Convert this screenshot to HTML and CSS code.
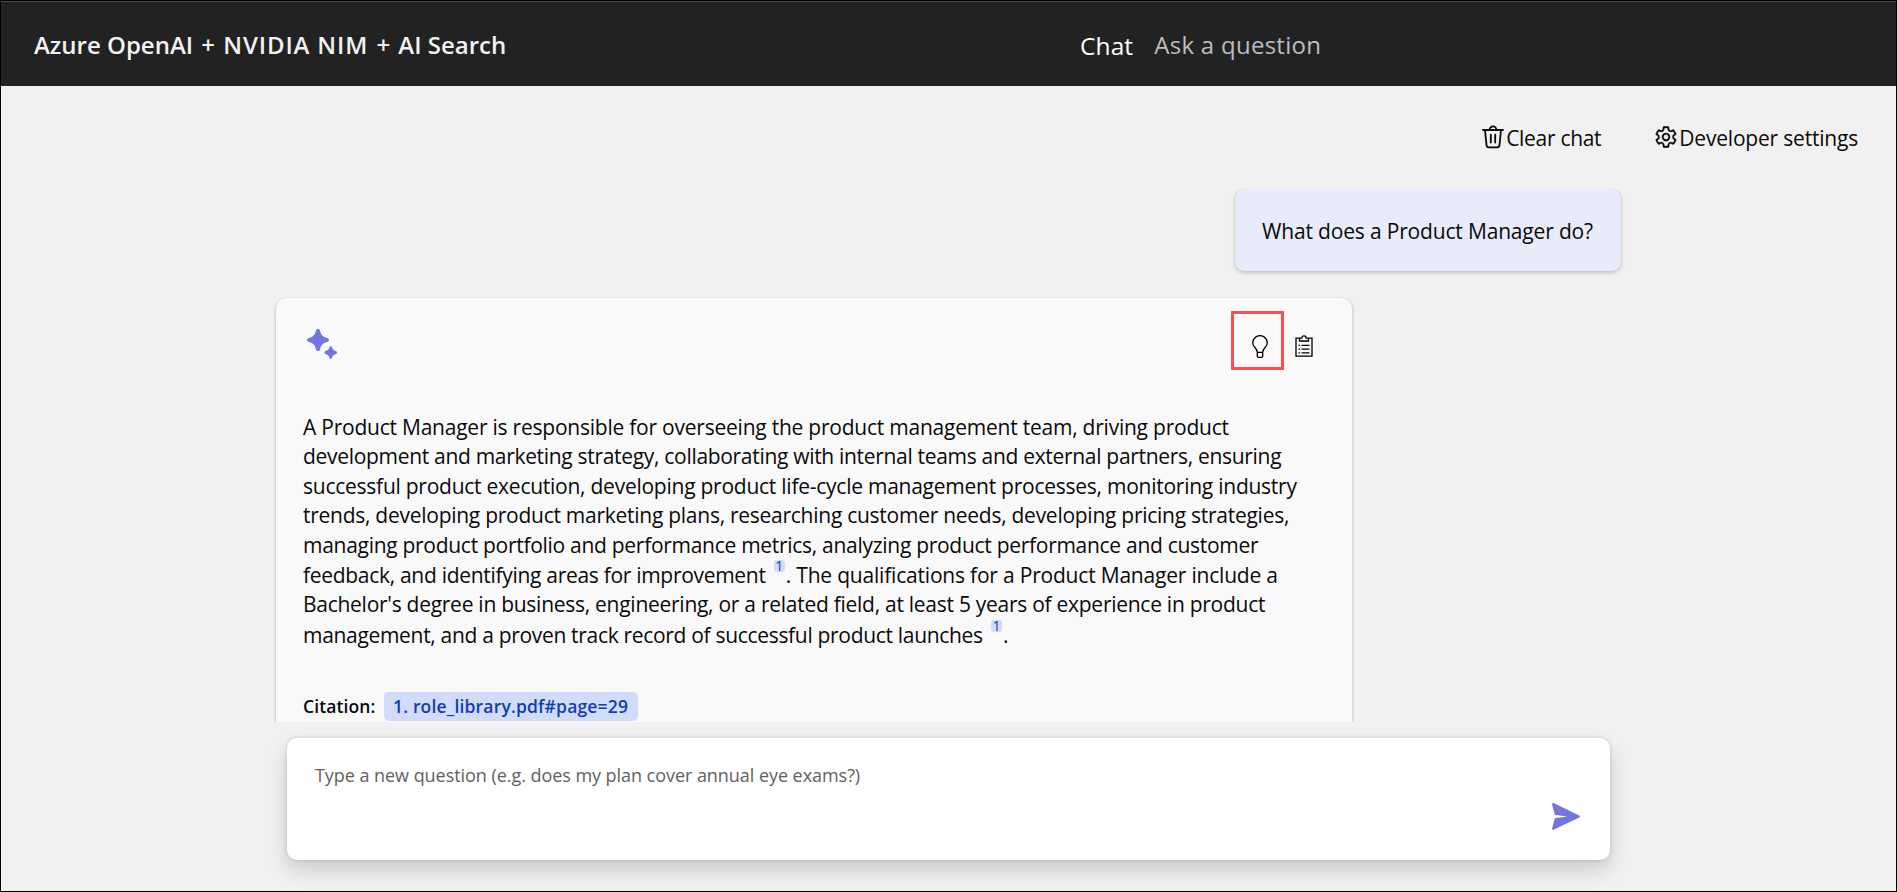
FILE: index.html
```html
<!DOCTYPE html>
<html lang="en">
<head>
<meta charset="utf-8">
<title>Azure OpenAI + NVIDIA NIM + AI Search</title>
<link rel="stylesheet" href="styles.css">
</head>
<body>
<div class="app">
  <header class="header">
    <h1 class="title">Azure OpenAI <span class="plus">+</span> <span class="brand">NVIDIA NIM</span> <span class="plus">+</span> AI Search</h1>
    <nav class="nav">
      <a class="nav-link active">Chat</a>
      <a class="nav-link">Ask a question</a>
    </nav>
  </header>
  <div class="commands">
    <button class="command">
      <svg class="command-icon" viewBox="0 0 22 24" fill="none" stroke="#0a0a0a" stroke-width="1.8" stroke-linecap="round" stroke-linejoin="round"><path d="M1 5h20M7.600 4.800a3.400 3.400 0 0 1 6.800 0M3 5.200l1.500 14.900a2.400 2.400 0 0 0 2.400 2.200h8.200a2.400 2.400 0 0 0 2.400-2.200L19 5.200M8.800 9.600v8M13.200 9.600v8"/></svg>
      <span class="clear-label">Clear chat</span>
    </button>
    <button class="command">
      <svg class="command-icon gear" viewBox="2 2 20 20" fill="#0a0a0a"><path d="M12.01 2.25c.74 0 1.47.1 2.18.25.32.07.55.33.59.65l.17 1.53a1.38 1.38 0 0 0 1.92 1.11l1.4-.61c.3-.13.64-.06.85.17a9.8 9.8 0 0 1 2.2 3.8c.1.3 0 .63-.26.82l-1.25.92a1.38 1.38 0 0 0 0 2.22l1.25.92c.26.19.36.52.27.82a9.8 9.8 0 0 1-2.2 3.8.75.75 0 0 1-.85.17l-1.4-.62a1.38 1.38 0 0 0-1.93 1.12l-.17 1.52a.75.75 0 0 1-.58.65 9.5 9.5 0 0 1-4.4 0 .75.75 0 0 1-.57-.65l-.17-1.52a1.38 1.38 0 0 0-1.93-1.11l-1.4.62a.75.75 0 0 1-.85-.18 9.8 9.8 0 0 1-2.2-3.8c-.1-.3 0-.63.26-.82l1.25-.92a1.38 1.38 0 0 0 0-2.22l-1.24-.92a.75.75 0 0 1-.28-.82 9.8 9.8 0 0 1 2.2-3.8c.23-.23.57-.3.86-.17l1.4.62c.4.17.86.15 1.25-.08.38-.22.63-.6.68-1.04l.17-1.53a.75.75 0 0 1 .58-.65c.72-.16 1.45-.24 2.2-.25zm0 1.5c-.45 0-.9.04-1.35.12l-.11.97a2.89 2.89 0 0 1-4.03 2.33l-.9-.4A8.3 8.3 0 0 0 4.28 9.1l.8.59a2.88 2.88 0 0 1 0 4.64l-.8.58a8.3 8.3 0 0 0 1.35 2.32l.9-.4a2.88 2.88 0 0 1 4.02 2.33l.1.99c.9.15 1.8.15 2.7 0l.1-.99a2.88 2.88 0 0 1 4.02-2.32l.9.4a8.3 8.3 0 0 0 1.36-2.33l-.8-.59a2.88 2.88 0 0 1 0-4.64l.8-.59a8.3 8.3 0 0 0-1.35-2.32l-.9.4a2.88 2.88 0 0 1-4.02-2.32l-.11-.98c-.45-.08-.9-.12-1.34-.12zM12 8.25a3.75 3.75 0 1 1 0 7.5 3.75 3.75 0 0 1 0-7.5zm0 1.5a2.25 2.25 0 1 0 0 4.5 2.25 2.25 0 0 0 0-4.5z" stroke="#0a0a0a" stroke-width=".25"/></svg>
      <span class="settings-label">Developer settings</span>
    </button>
  </div>
  <main class="stream">
    <div class="user-row"><div class="bubble">What does a Product Manager do?</div></div>
    <section class="answer">
      <div class="answer-head">
        <svg class="sparkle" viewBox="0 0 30 30" fill="#7376e1"><path d="M11 0c1 0 1.800.7 2 1.600 1 4.300 2.700 6.300 7 7.500 1 .3 2 .8 2 1.900s-1 1.600-2 1.900c-4.300 1.200-6 3.200-7 7.500-.2.900-1 1.600-2 1.600s-1.800-.7-2-1.600c-1-4.300-2.700-6.300-7-7.500-1-.3-2-.8-2-1.900s1-1.600 2-1.900c4.300-1.200 6-3.200 7-7.500.2-.9 1-1.600 2-1.600z"/><path d="M23.700 17.300c.6 0 1 .4 1.200.9.600 2 1.500 2.900 3.900 3.900.6.200 1.200.7 1.200 1.400s-.6 1.200-1.200 1.400c-2.400 1-3.300 1.900-3.900 4.200-.2.500-.6.900-1.200.9s-1-.4-1.200-.9c-.6-2.300-1.500-3.200-3.900-4.200-.6-.2-1.200-.7-1.200-1.400s.6-1.200 1.200-1.400c2.400-1 3.300-1.900 3.900-3.900.2-.5.600-.9 1.200-.9z"/></svg>
        <div class="tools">
          <button class="tool highlighted"><svg class="bulb" viewBox="0 0 16 23" fill="none" stroke="#000" stroke-width="1.300"><path d="M5.300 17.300C5.300 13 .7 12 .7 7.900a7.300 7.300 0 0 1 14.600 0c0 4.100-4.600 5.100-4.600 9.400M5.300 17.300h5.400M5.300 17v4.200q0 1.100 1.100 1.100h3.200q1.100 0 1.100-1.100V17"/></svg></button>
          <button class="tool"><svg class="clip" viewBox="0 0 18 22" fill="none" stroke="#000" stroke-width="1.300"><path d="M4.500 3.200H1v18h16v-18h-3.500M4.500 6V3.200h2.300c0-3.200 4.400-3.200 4.400 0h2.300V6zM6.500 10.300h8M6.500 14.100h8M6.500 17.900h8M3.500 10.300H5M3.500 14.100H5M3.500 17.900H5"/></svg></button>
        </div>
      </div>
      <p class="answer-text">
        <span class="line l1">A Product Manager is responsible for overseeing the product management team, driving product</span>
        <span class="line l2">development and marketing strategy, collaborating with internal teams and external partners, ensuring</span>
        <span class="line l3">successful product execution, developing product life-cycle management processes, monitoring industry</span>
        <span class="line l4">trends, developing product marketing plans, researching customer needs, developing pricing strategies,</span>
        <span class="line l5">managing product portfolio and performance metrics, analyzing product performance and customer</span>
        <span class="line l6">feedback, and identifying areas for improvement <sup class="ref">1</sup><span class="l6-end">. The qualifications for a Product Manager include a</span></span>
        <span class="line l7">Bachelor's degree in business, engineering, or a related field, at least 5 years of experience in product</span>
        <span class="line l8">management, and a proven track record of successful product launches <sup class="ref">1</sup>.</span>
      </p>
      <div class="citations"><span class="citation-label">Citation:</span><a class="citation">1. role_library.pdf#page=29</a></div>
    </section>
  </main>
  <div class="composer">
    <div class="placeholder">Type a new question (e.g. does my plan cover annual eye exams?)</div>
    <button class="send"><svg class="send-icon" viewBox="0 0 28 27" fill="#7376e1"><path d="M1.500.1 27.300 12.500q1.400.9 0 1.900L1.500 26.800Q-.2 27.100.1 25.500L2.600 16q.2-.9 1.100-1l11.800-1.500L3.700 12q-.9-.1-1.100-1L.1 1.500Q-.2-.2 1.500.1z"/></svg></button>
  </div>
</div>
</body>
</html>
```
FILE: styles.css
```css
* { box-sizing: border-box; }
body { margin: 0; font-family: "Open Sans", "Noto Sans", sans-serif; color: #0a0a0a; }
button { border: 0; background: none; padding: 0; margin: 0; font: inherit; color: inherit; }
svg { display: block; flex: none; }
.app { width: 1897px; height: 892px; border: 1px solid #000; background: #f1f1f1; display: flex; flex-direction: column; overflow: hidden; }

.header { height: 85px; flex: none; background: #222; border-top: 1px solid #4a4a4a; display: grid; grid-template-columns: 1079px 1fr; align-items: center; color: #f2f2f2; white-space: nowrap; }
.title { margin: 0; padding: 2px 0 0 33px; font-size: 24px; line-height: 34px; font-weight: 600; }
.plus { margin: 0 2px; }
.brand { letter-spacing: .85px; }
.nav { display: flex; gap: 21px; font-size: 24px; line-height: 34px; padding-top: 2px; }
.nav-link { color: #bdbdbd; padding-bottom: 1px; letter-spacing: .28px; }
.nav-link.active { color: #fff; padding: 1px 0 0; font-size: 24.500px; letter-spacing: .1px; }

.commands { height: 103px; flex: none; display: flex; justify-content: flex-end; gap: 54px; padding: 38px 38px 0 0; white-space: nowrap; }
.command { height: 30px; display: flex; align-items: flex-start; gap: 2px; font-size: 21px; line-height: 29px; }
.command-icon { width: 22px; height: 24px; margin-top: 1px; }
.command-icon.gear { width: 22px; height: 22px; margin-top: 2px; }
.clear-label { letter-spacing: -.3px; }
.settings-label { letter-spacing: -.2px; }

.stream { height: 533px; flex: none; overflow: hidden; padding: 0 275px; }
.user-row { display: flex; justify-content: flex-end; margin-bottom: 27px; }
.bubble { width: 386px; height: 82px; border-radius: 9px; background: #e8ebfa; box-shadow: 0 2px 4px rgba(0,0,0,.18), 0 0 2px rgba(0,0,0,.12); padding: 26px 27px; font-size: 21px; line-height: 32px; letter-spacing: -.17px; white-space: nowrap; }
.answer { width: 1076px; height: 480px; border-radius: 10px; background: #f9f9f9; box-shadow: 0 2px 4px rgba(0,0,0,.18), 0 0 2px rgba(0,0,0,.12); padding: 13px 28px 0 27px; }
.answer-head { height: 101.500px; display: flex; justify-content: space-between; }
.sparkle { width: 30px; height: 30px; margin: 18px 0 0 4px; }
.tools { display: flex; }
.tool { display: flex; align-items: flex-start; height: 59px; padding: 24px 11px 0; }
.tool.highlighted { width: 53px; border: 3px solid #fb4e4e; padding: 21px 13px 0 18px; }
.bulb { width: 16px; height: 23px; }
.clip { width: 18px; height: 22px; }

.answer-text { margin: 0; font-size: 21px; line-height: 29.600px; }
.line { display: block; height: 29.600px; white-space: nowrap; }
.l1 { letter-spacing: -.23px; }
.l2 { letter-spacing: -.31px; }
.l3 { letter-spacing: -.25px; }
.l4 { letter-spacing: -.265px; }
.l5 { letter-spacing: -.287px; }
.l6 { letter-spacing: -.3px; }
.l6-end { letter-spacing: -.2px; }
.l7 { letter-spacing: -.27px; }
.l8 { letter-spacing: -.315px; }
.ref { display: inline-block; vertical-align: 12px; margin: 0 1px 0 3px; font-size: 14px; line-height: 12px; height: 12px; padding: 0 1.500px; border-radius: 3px; background: #d1dbfa; color: #123bb6; letter-spacing: 0; }
.citations { display: flex; align-items: center; margin-top: 42.500px; font-size: 17.500px; line-height: 29px; font-weight: 600; white-space: nowrap; }
.citation-label { width: 81px; letter-spacing: .1px; }
.citation { width: 254px; height: 29px; padding: 0 9px; border-radius: 5px; background: #d1dbfa; color: #123bb6; letter-spacing: .18px; }

.composer { width: 1323px; height: 122px; flex: none; margin: 16px 0 0 286px; border-radius: 10px; background: #fff; box-shadow: 0 10px 20px rgba(0,0,0,.16), 0 0 4px rgba(0,0,0,.14); display: flex; justify-content: space-between; padding: 22px 30px 0 28px; }
.placeholder { font-size: 18px; line-height: 30px; letter-spacing: -.05px; color: #616161; white-space: nowrap; }
.send { height: 27px; margin-top: 43px; }
.send-icon { width: 28px; height: 27px; }
```
